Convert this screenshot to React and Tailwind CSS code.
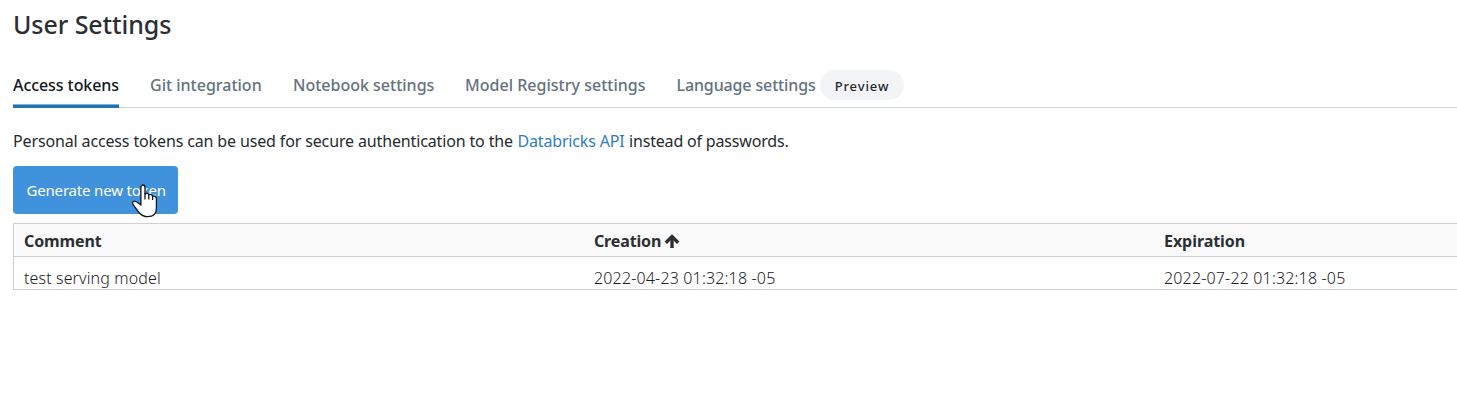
const tabs = [
  { label: "Access tokens", cls: "w-[106px] text-[#11171c] tracking-[-0.07px]" },
  { label: "Git integration", cls: "w-[112px] text-[#64727d]" },
  { label: "Notebook settings", cls: "w-[141px] text-[#64727d]" },
  { label: "Model Registry settings", cls: "w-[180px] text-[#64727d] tracking-[0.02px]" },
];

const columns = [
  { title: "Comment", value: "test serving model", tracking: "tracking-[-0.12px]", body: "tracking-[0.13px]" },
  { title: "Creation", value: "2022-04-23 01:32:18 -05", tracking: "tracking-[-0.15px]", body: "tracking-[0.16px]", sorted: true },
  { title: "Expiration", value: "2022-07-22 01:32:18 -05", tracking: "tracking-[-0.05px]", body: "tracking-[0.16px]" },
];

function SortArrow() {
  return (
    <svg className="ml-[3px] h-[15px] w-[16px]" viewBox="0 0 16 15" fill="none" stroke="#2b2f33" strokeWidth="3.4">
      <path d="M8 14V3" />
      <path d="M1.8 8.8 8 2.6l6.2 6.2" />
    </svg>
  );
}

function HandCursor() {
  return (
    <svg className="absolute top-[18px] left-[118px] h-[34px] w-[27px]" viewBox="0 0 27 34">
      <path
        d="M9.9 21V3.4C9.9.2 14 .2 14 3.4V10C15.3 8.7 17.5 9.2 17.8 10.8 19.3 9.9 21.3 10.5 21.6 12.2 23.5 11.6 25.4 12.5 25.4 14.6V24C25.4 29.6 22 32.7 16.8 32.7 12.4 32.7 9.8 30.8 7.6 28L2 20.6C.6 17.6 3 16.4 5.4 17.8L9.9 21Z"
        fill="#fff" stroke="#16181d" strokeWidth="1.3" strokeLinejoin="round"
      />
      <path d="M14 9v6.5M17.8 11v4.5M21.6 12v4" fill="none" stroke="#16181d" strokeWidth="1.3" />
    </svg>
  );
}

export default function App() {
  return (
    <main className="h-[402px] overflow-hidden bg-white pl-[13px] font-['Noto_Sans','Open_Sans',sans-serif] text-base whitespace-nowrap text-[#11171c]">
      <h1 className="pt-[8px] text-[25px] leading-8 font-medium tracking-[-0.08px] text-[#2b2f33]">User Settings</h1>

      <nav className="mt-[22px] flex h-[46px] gap-[31px] border-b border-[#cdd6de] font-medium">
        {tabs.map((tab, i) => (
          <div key={tab.label} className={`relative leading-[46px] ${tab.cls}`}>
            {tab.label}
            {i === 0 && <span className="absolute inset-x-0 -bottom-px h-[4px] border-t border-[#7fb0d9] bg-[#2272b4]" />}
          </div>
        ))}
        <div className="flex text-[#64727d]">
          <span className="w-[144px] pl-[0.5px] leading-[46px] tracking-[-0.13px]">Language settings</span>
          <span className="mt-[8px] h-[30px] w-[84px] rounded-full bg-[#f3f4f6] text-center text-[13px] leading-[32px] tracking-[0.9px] text-[#1f272d]">
            Preview
          </span>
        </div>
      </nav>

      <p className="mt-[21px] flex h-6 leading-6 text-[#252b30]">
        <span className="w-[504.5px] tracking-[-0.14px]">Personal access tokens can be used for secure authentication to the</span>
        <a className="w-[111.5px] tracking-[-0.17px] text-[#2f7cc0]">Databricks API</a>
        <span className="tracking-[-0.18px]">instead of passwords.</span>
      </p>

      <div className="relative mt-[13px] h-12 w-[165px]">
        <button className="h-12 w-[165px] rounded bg-[#4192dc] pl-[13.5px] text-left text-[15px] tracking-[-0.18px] text-white">
          Generate new token
        </button>
        <HandCursor />
      </div>

      <section className="mt-[9px] h-[67px] border-y border-l border-[#cfcfcf]">
        <div className="grid h-[33px] grid-cols-[570px_570px_1fr] border-b border-[#cfcfcf] bg-[#fafafa] pl-[10px] font-bold text-[#2b2f33]">
          {columns.map((c) => (
            <div key={c.title} className={`flex items-center pt-[2px] ${c.tracking}`}>
              {c.title}
              {c.sorted && <SortArrow />}
            </div>
          ))}
        </div>
        <div className="grid h-[31px] grid-cols-[570px_570px_1fr] overflow-hidden pl-[10px] font-light text-[#1c2126]">
          {columns.map((c) => (
            <div key={c.title} className={`pt-[9px] leading-6 ${c.body}`}>{c.value}</div>
          ))}
        </div>
      </section>
    </main>
  );
}
